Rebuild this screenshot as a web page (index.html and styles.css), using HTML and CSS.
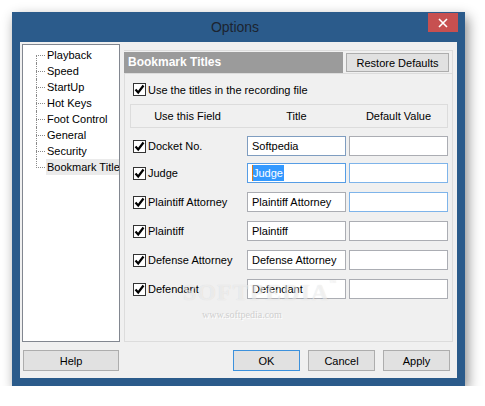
FILE: index.html
```html
<!DOCTYPE html>
<html lang="en">
<head>
    <meta charset="UTF-8">
    <meta name="viewport" content="width=device-width, initial-scale=1.0">
    <title>Options</title>
    <link rel="stylesheet" href="styles.css">
</head>
<body>
    <div class="window">
        <div class="titlebar">
            <span></span>
            <span class="title">Options</span>
            <button class="close">
                <svg width="10" height="10" viewBox="0 0 10 10"><path d="M1 1 L9 9 M9 1 L1 9" stroke="#fff" stroke-width="1.6"/></svg>
            </button>
        </div>
        <div class="client">
            <div class="main">
                <ul class="tree">
                    <li><span>Playback</span></li>
                    <li><span>Speed</span></li>
                    <li><span>StartUp</span></li>
                    <li><span>Hot Keys</span></li>
                    <li><span>Foot Control</span></li>
                    <li><span>General</span></li>
                    <li><span>Security</span></li>
                    <li class="selected"><span>Bookmark Titles</span></li>
                </ul>
                <div class="pane">
                    <div class="pane-head">
                        <div class="head-title">Bookmark Titles</div>
                        <button class="btn restore">Restore Defaults</button>
                    </div>
                    <div class="pane-body">
                        <div class="check-row">
                            <span class="check"><svg width="11" height="11" viewBox="0 0 11 11"><path d="M1.5 5.5 L4.2 8.5 L9.5 1.5" fill="none" stroke="#000" stroke-width="2.2"/></svg></span>
                            Use the titles in the recording file
                        </div>
                        <div class="col-head">
                            <span>Use this Field</span>
                            <span>Title</span>
                            <span>Default Value</span>
                        </div>
                        <div class="fields">
                            <div class="row first">
                                <div class="field"><span class="check"><svg width="11" height="11" viewBox="0 0 11 11"><path d="M1.5 5.5 L4.2 8.5 L9.5 1.5" fill="none" stroke="#000" stroke-width="2.2"/></svg></span>Docket No.</div>
                                <div class="input soft">Softpedia</div>
                                <div class="input"></div>
                            </div>
                            <div class="row">
                                <div class="field"><span class="check"><svg width="11" height="11" viewBox="0 0 11 11"><path d="M1.5 5.5 L4.2 8.5 L9.5 1.5" fill="none" stroke="#000" stroke-width="2.2"/></svg></span>Judge</div>
                                <div class="input focus"><span class="sel">Judge</span></div>
                                <div class="input hover"></div>
                            </div>
                            <div class="row">
                                <div class="field"><span class="check"><svg width="11" height="11" viewBox="0 0 11 11"><path d="M1.5 5.5 L4.2 8.5 L9.5 1.5" fill="none" stroke="#000" stroke-width="2.2"/></svg></span>Plaintiff Attorney</div>
                                <div class="input">Plaintiff Attorney</div>
                                <div class="input hover"></div>
                            </div>
                            <div class="row">
                                <div class="field"><span class="check"><svg width="11" height="11" viewBox="0 0 11 11"><path d="M1.5 5.5 L4.2 8.5 L9.5 1.5" fill="none" stroke="#000" stroke-width="2.2"/></svg></span>Plaintiff</div>
                                <div class="input">Plaintiff</div>
                                <div class="input"></div>
                            </div>
                            <div class="row">
                                <div class="field"><span class="check"><svg width="11" height="11" viewBox="0 0 11 11"><path d="M1.5 5.5 L4.2 8.5 L9.5 1.5" fill="none" stroke="#000" stroke-width="2.2"/></svg></span>Defense Attorney</div>
                                <div class="input">Defense Attorney</div>
                                <div class="input"></div>
                            </div>
                            <div class="row">
                                <div class="field"><span class="check"><svg width="11" height="11" viewBox="0 0 11 11"><path d="M1.5 5.5 L4.2 8.5 L9.5 1.5" fill="none" stroke="#000" stroke-width="2.2"/></svg></span>Defendant</div>
                                <div class="input">Defendant</div>
                                <div class="input"></div>
                            </div>
                        </div>
                        <div class="watermark">SOFTPEDIA<sup>™</sup></div>
                        <div class="watermark-url">www.softpedia.com</div>
                    </div>
                </div>
            </div>
            <div class="footer">
                <button class="btn help">Help</button>
                <button class="btn ok">OK</button>
                <button class="btn">Cancel</button>
                <button class="btn">Apply</button>
            </div>
        </div>
    </div>
</body>
</html>
```
FILE: styles.css
```css
body {
    margin: 0;
    background-color: #fff;
    font-family: "Liberation Sans", Arial, sans-serif;
    font-size: 11px;
    color: #000;
}
.window {
    margin: 12px 0 0 12px;
    width: 453px;
    height: 374px;
    background-color: #2b5b8b;
    box-shadow: 3px 5px 12px rgba(0, 0, 0, 0.45);
}
.titlebar {
    height: 30px;
    padding: 1px 7px 0 0;
    box-sizing: border-box;
    display: grid;
    grid-template-columns: 1fr auto 1fr;
}
.title {
    align-self: center;
    margin-top: -1px;
    font-size: 14px;
    color: #1c2430;
}
.close {
    justify-self: end;
    align-self: start;
    width: 30px;
    height: 19px;
    border: none;
    padding: 0;
    background-color: #c75050;
    display: flex;
    align-items: center;
    justify-content: center;
}
.client {
    margin: 0 8px;
    height: 336px;
    background-color: #f0f0f0;
    padding: 2px 4px 0 2px;
    box-sizing: border-box;
}
.main {
    display: flex;
    height: 298px;
}
.tree {
    margin: 0;
    padding: 2px 0 0 0;
    list-style: none;
    width: 98px;
    box-sizing: border-box;
    border: 1px solid #828790;
    background-color: #fff;
    overflow: hidden;
}
.tree li {
    position: relative;
    height: 16px;
    line-height: 16px;
    padding-left: 23px;
    white-space: nowrap;
}
.tree li span {
    padding: 0 1px;
}
.tree li::before {
    content: "";
    position: absolute;
    left: 13px;
    top: 8px;
    width: 9px;
    border-top: 1px dotted #8a8a8a;
}
.tree li::after {
    content: "";
    position: absolute;
    left: 13px;
    top: 0;
    bottom: 0;
    border-left: 1px dotted #8a8a8a;
}
.tree li:first-child::after {
    top: 8px;
}
.tree li:last-child::after {
    bottom: 7px;
}
.tree li.selected span {
    display: inline-block;
    background-color: #ebebeb;
}
.pane {
    margin: 6px 0 0 4px;
    width: 329px;
    display: flex;
    flex-direction: column;
    height: 292px;
}
.pane-head {
    display: flex;
    align-items: center;
    gap: 3px;
    border-top: 1px solid #dcdcdc;
    border-right: 1px solid #dcdcdc;
    padding: 1px 3px 0 0;
    height: 23px;
    box-sizing: border-box;
}
.head-title {
    flex: 1;
    align-self: stretch;
    background-color: #9b9b9b;
    color: #fff;
    font-weight: bold;
    font-size: 12px;
    line-height: 21px;
    padding-left: 4px;
}
.btn {
    font-family: "Liberation Sans", Arial, sans-serif;
    font-size: 11px;
    color: #000;
    background-color: #e1e1e1;
    border: 1px solid #adadad;
    padding: 0;
    height: 21px;
}
.restore {
    width: 103px;
    height: 19px;
}
.pane-body {
    position: relative;
    flex: 1;
    border: 1px solid #dcdcdc;
    padding: 9px 4px 0 5px;
}
.check {
    display: inline-flex;
    align-items: center;
    justify-content: center;
    width: 11px;
    height: 11px;
    border: 1px solid #333;
    background-color: #fff;
    margin-right: 2px;
}
.check-row {
    display: flex;
    align-items: center;
    margin-left: 3px;
    height: 13px;
}
.col-head {
    margin-top: 8px;
    height: 24px;
    box-sizing: border-box;
    border: 1px solid #dcdcdc;
    display: grid;
    grid-template-columns: 113px 99px 99px;
    column-gap: 3px;
    align-items: center;
    text-align: center;
}
.fields {
    margin: 8px 0 0 3px;
    display: flex;
    flex-direction: column;
    gap: 9px;
}
.row {
    display: grid;
    grid-template-columns: 111px 99px 99px;
    column-gap: 3px;
    height: 20px;
}
.row.first {
    margin-bottom: -2px;
}
.field {
    display: flex;
    align-items: center;
}
.input {
    box-sizing: border-box;
    border: 1px solid #abadb3;
    background-color: #fff;
    padding-left: 4px;
    line-height: 18px;
    white-space: nowrap;
    overflow: hidden;
}
.input.soft {
    border-color: #7f9dc0;
}
.input.focus {
    border-color: #569de5;
}
.input.hover {
    border-color: #7eb4ea;
}
.sel {
    background-color: #3399ff;
    color: #fff;
    border-left: 1px solid #e07a1a;
    padding: 2px 1px 2px 0;
}
.watermark {
    position: absolute;
    left: 58px;
    top: 205px;
    font-family: "Liberation Serif", serif;
    font-weight: bold;
    font-size: 24px;
    letter-spacing: 1px;
    color: rgba(255, 255, 255, 0.55);
    text-shadow: 0 0 1px rgba(0, 0, 0, 0.12);
    pointer-events: none;
}
.watermark sup {
    font-size: 7px;
    vertical-align: top;
}
.watermark-url {
    position: absolute;
    left: 77px;
    top: 235px;
    font-family: "Liberation Serif", serif;
    font-size: 10px;
    color: #cfcfcf;
    text-shadow: 1px 1px 0 #fff;
    pointer-events: none;
}
.footer {
    display: flex;
    gap: 8px;
    margin: 8px 3px 0 1px;
}
.footer .btn {
    width: 67px;
}
.footer .help {
    width: 96px;
    margin-right: auto;
}
.footer .ok {
    border-color: #3c91dc;
}
```
